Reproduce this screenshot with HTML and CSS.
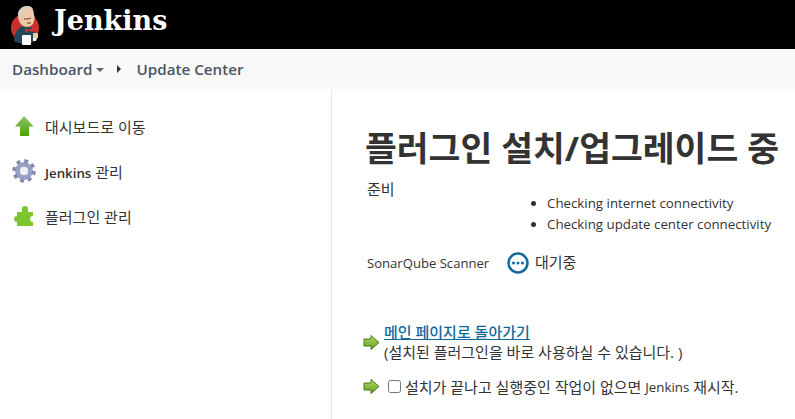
FILE: index.html
```html
<!DOCTYPE html>
<html lang="ko">
<head>
  <meta charset="UTF-8" />
  <title>Update Center [Jenkins]</title>
  <link rel="stylesheet" href="styles.css">
</head>
<body>
  <header class="topbar">
    <svg class="logo" width="36" height="44" viewBox="8 0 36 44">
      <circle cx="25" cy="24" r="14" fill="#c8322c"/>
      <path d="M14 37c0-8 4-15 11-15s11 6 11 13c-2 3-6 5-11 5-4 0-8-1-11-3z" fill="#26475a"/>
      <path d="M18 11c0-5 4-9 9-9s7 4 7 9c1 2 1 4 0 5 0 4-3 7-7 7-6 0-9-6-9-12z" fill="#efc8a4"/>
      <path d="M18 11c0-5 4-9 9-9 3 0 5 1 6 3-5 0-9 1-11 4l-1 5c-2 0-3-1-3-3z" fill="#d8cdc2"/>
      <path d="M24 15c2 0 5 0 7-1M27 19h4" fill="none" stroke="#5c3a28" stroke-width="1"/>
      <path d="M25 24l4 2 4-2v4l-4-1-4 1z" fill="#d32f2f"/>
      <rect x="22" y="31" width="9" height="10" rx="1" fill="#fff"/>
      <path d="M33 29h5v5h-5z" fill="#efc8a4"/>
      <path d="M33 34h4l-1 3h-3z" fill="#fff"/>
    </svg>
    <span class="brand">Jenkins</span>
  </header>
  <nav class="crumbs">
    <span class="crumb">Dashboard</span>
    <span class="caret-down"></span>
    <span class="caret-right"></span>
    <span class="crumb">Update Center</span>
  </nav>
  <div class="main">
    <aside class="side">
      <div class="task">
        <svg width="24" height="24" viewBox="0 0 24 24">
          <defs>
            <linearGradient id="up" x1="0" y1="0" x2="0" y2="1">
              <stop offset="0" stop-color="#8cc56a"/>
              <stop offset="1" stop-color="#4fa000"/>
            </linearGradient>
          </defs>
          <path d="M12 2l9.500 10.500H17V22H8v-9.500H3z" fill="url(#up)"/>
        </svg>
        <span class="ko">대시보드로 이동</span>
      </div>
      <div class="task">
        <svg width="24" height="24" viewBox="0 0 24 24">
          <circle cx="12" cy="12" r="6.500" fill="none" stroke="#9a9fc6" stroke-width="5"/>
          <circle cx="12" cy="12" r="10" fill="none" stroke="#8389ad" stroke-width="3.500" stroke-dasharray="3.800 4.050"/>
          <circle cx="12" cy="12" r="4" fill="#eef0f6"/>
        </svg>
        <span class="ko"><span class="lat mid">Jenkins</span> 관리</span>
      </div>
      <div class="task">
        <svg width="24" height="24" viewBox="0 0 24 24">
          <path d="M5 8h5V5a3 3 0 1 1 6 0v3h5v4a3 3 0 1 0 0 6v4H5v-4a3 3 0 1 1 0-6z" fill="#7cc52e"/>
        </svg>
        <span class="ko">플러그인 관리</span>
      </div>
    </aside>
    <main class="content">
      <h1>플러그인 설치/업그레이드 중</h1>
      <div class="prep">
        <span class="prep-label ko">준비</span>
        <ul class="checks">
          <li>Checking internet connectivity</li>
          <li>Checking update center connectivity</li>
        </ul>
      </div>
      <div class="job">
        <span class="job-name">SonarQube Scanner</span>
        <svg width="24" height="24" viewBox="0 0 24 24">
          <circle cx="12" cy="12" r="9.500" fill="#fff" stroke="#11689c" stroke-width="2.500"/>
          <circle cx="7.500" cy="12" r="1.500" fill="#11689c"/>
          <circle cx="12" cy="12" r="1.500" fill="#11689c"/>
          <circle cx="16.500" cy="12" r="1.500" fill="#11689c"/>
        </svg>
        <span class="job-state ko">대기중</span>
      </div>
      <div class="action back">
        <svg class="arrow" width="17" height="17" viewBox="0 0 17 17">
          <defs>
            <linearGradient id="go" x1="0" y1="0" x2="0" y2="1">
              <stop offset="0" stop-color="#b4dc6e"/>
              <stop offset="1" stop-color="#5f9e1c"/>
            </linearGradient>
          </defs>
          <path d="M1 5h7V1.500l8 7-8 7V12H1z" fill="url(#go)" stroke="#4a7a18"/>
        </svg>
        <div>
          <a href="#" class="back-link ko">메인 페이지로 돌아가기</a>
          <div class="note ko">(설치된 플러그인을 바로 사용하실 수 있습니다. )</div>
        </div>
      </div>
      <div class="action restart">
        <svg class="arrow" width="17" height="17" viewBox="0 0 17 17"><path d="M1 5h7V1.500l8 7-8 7V12H1z" fill="url(#go)" stroke="#4a7a18"/></svg>
        <label class="restart-label ko"><input type="checkbox">설치가 끝나고 실행중인 작업이 없으면&nbsp;<span class="lat">Jenkins</span>&nbsp;재시작.</label>
      </div>
    </main>
  </div>
</body>
</html>
```

FILE: styles.css
```css
body {
  margin: 0;
  height: 419px;
  overflow: hidden;
  font-family: 'Open Sans', 'Noto Sans CJK KR', sans-serif;
  font-size: 13.3px;
  color: #333;
  background: #fff;
}

.ko {
  font-size: 15px;
}

.lat {
  font-size: 13.3px;
}

.topbar {
  height: 49px;
  background: #000;
  display: flex;
  align-items: center;
  padding-left: 8px;
}

.logo {
  margin-top: 2px;
}

.brand {
  margin-left: 10px;
  margin-top: -8px;
  font-family: 'DejaVu Serif', serif;
  font-weight: bold;
  font-size: 27px;
  color: #fff;
}

.crumbs {
  height: 40px;
  background: #f9f9f9;
  display: flex;
  align-items: center;
  padding-left: 12px;
}

.crumb {
  font-size: 15.2px;
  font-weight: 600;
  color: #4a5563;
}

.caret-down {
  margin: 2px 0 0 3px;
  border-left: 4px solid transparent;
  border-right: 4px solid transparent;
  border-top: 4px solid #5a6472;
}

.caret-right {
  margin: 0 16px 0 13px;
  border-top: 4px solid transparent;
  border-bottom: 4px solid transparent;
  border-left: 4px solid #333;
}

.main {
  display: flex;
  height: 330px;
}

.side {
  width: 331px;
  border-right: 1px solid #e6e6e6;
  padding-top: 25px;
}

.task {
  height: 24px;
  margin-bottom: 21px;
  padding-left: 12px;
  display: flex;
  align-items: center;
  gap: 9px;
}

.mid {
  font-weight: 600;
}

.content {
  padding: 37px 0 0 35px;
  flex: 1;
  min-width: 0;
}

h1 {
  margin: 0 0 0 -2px;
  font-size: 34.6px;
  line-height: 44px;
  font-weight: bold;
  white-space: nowrap;
}

.prep {
  display: flex;
  margin-top: 9px;
}

.prep-label {
  width: 140px;
  line-height: 20px;
}

.checks {
  margin: 14px 0 0;
  padding: 0 0 0 40px;
  line-height: 21px;
}

.job {
  display: flex;
  align-items: center;
  margin-top: 16px;
  height: 24px;
}

.job-name {
  width: 139px;
  font-size: 13.1px;
}

.job-state {
  margin: -3px 0 0 5px;
}

.action {
  display: flex;
  align-items: center;
  margin-left: -4px;
}

.back {
  margin-top: 47px;
  gap: 4px;
}

.back-link {
  font-weight: 500;
  color: #11689c;
  display: block;
  line-height: 20px;
}

.note {
  line-height: 21px;
}

.restart {
  margin-top: 13px;
  gap: 7px;
}

.restart-label {
  display: flex;
  align-items: center;
}

.restart-label input {
  margin: 0 4px 0 1px;
  width: 13px;
  height: 13px;
}
```
